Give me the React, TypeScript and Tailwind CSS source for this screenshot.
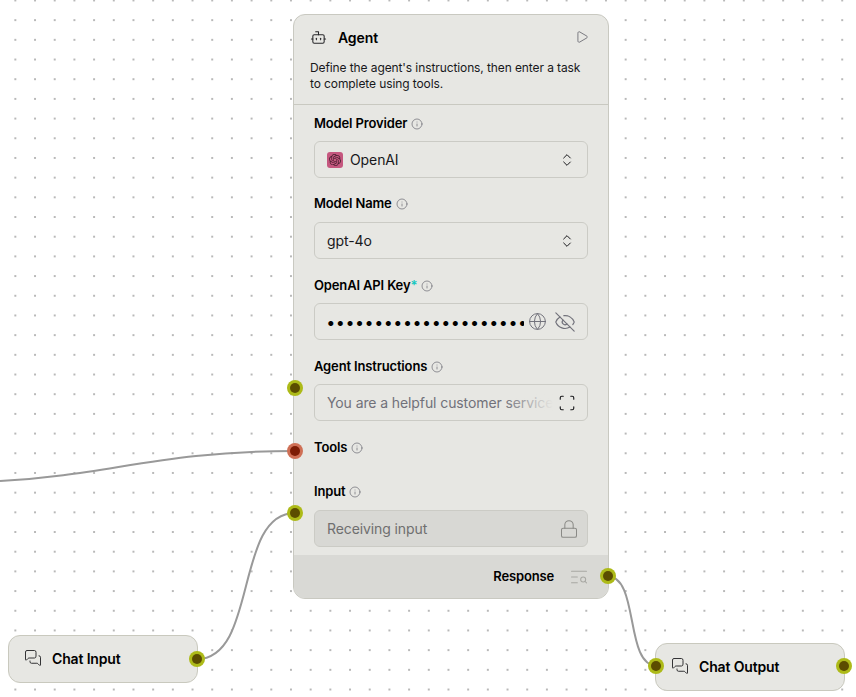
import type { ReactNode } from "react";
import {
  Bot,
  ChevronsUpDown,
  EyeOff,
  Globe,
  Info,
  Lock,
  MessagesSquare,
  Play,
  Scan,
  TextSearch,
} from "lucide-react";
import { SiOpenai } from "react-icons/si";

function Handle({ className, red }: { className: string; red?: boolean }) {
  return (
    <div
      className={`absolute z-10 flex size-4 items-center justify-center rounded-full ${
        red ? "bg-[#cf6f55]" : "bg-[#adba18]"
      } ${className}`}
    >
      <div className={`size-[10px] rounded-full ${red ? "bg-[#7d1c05]" : "bg-[#5b4d00]"}`} />
    </div>
  );
}

function Label({ children }: { children: ReactNode }) {
  return (
    <div className="flex h-5 items-center gap-1 pt-[2px] text-[13px] font-semibold tracking-[-0.15px] text-black">
      <span>{children}</span>
      <Info className="size-3 text-[#71717a]" strokeWidth={1.5} />
    </div>
  );
}

function Field({ children, disabled }: { children: ReactNode; disabled?: boolean }) {
  return (
    <div
      className={`flex h-[37px] items-center rounded-md border border-[#cbcbc5] pl-3 pr-2 text-[14px] tracking-[-0.1px] ${
        disabled ? "bg-[#d8d8d4]" : "bg-[#e7e7e3]"
      }`}
    >
      {children}
    </div>
  );
}

function SmallNode({ title, className }: { title: string; className: string }) {
  return (
    <div
      className={`absolute flex h-[48px] items-center rounded-xl border border-[#c9c9be] bg-[#e7e7e3] pb-[2px] pl-[15px] ${className}`}
    >
      <MessagesSquare className="size-[18px] text-[#27272a]" strokeWidth={1.25} />
      <span className="ml-[10px] text-[14px] font-semibold tracking-[-0.15px] text-black">{title}</span>
    </div>
  );
}

export default function App() {
  return (
    <div className="relative h-[697px] w-[856px] overflow-hidden bg-white font-['Inter',sans-serif] [background-image:radial-gradient(circle,#b8b8b8_0.7px,transparent_1.2px)] [background-position:5.5px_-9.4px] [background-size:19.7px_19.7px]">
      <svg className="absolute inset-0" width="856" height="697" fill="none" stroke="#999999" strokeWidth="2">
        <path d="M0 481 C 110 475 160 451 295 451" />
        <path d="M197 659 C 258 659 234 513 295 513" />
        <path d="M607 576 C 640 576 624 666 657 666" />
      </svg>

      <div className="absolute left-[293px] top-[14px] flex h-[585px] w-[316px] flex-col overflow-hidden rounded-xl border border-[#c9c9c1] bg-[#e7e7e3]">
        <div className="flex h-[45px] shrink-0 items-center justify-between pl-4 pr-[19px]">
          <div className="flex items-center gap-[11px]">
            <Bot className="size-[17px] text-[#27272a]" strokeWidth={1.5} />
            <span className="text-[14px] font-semibold tracking-[-0.1px] text-black">Agent</span>
          </div>
          <Play className="mb-[1px] size-[14px] text-[#52525b]" strokeWidth={1.25} />
        </div>
        <div className="h-[45px] shrink-0 border-b border-[#c9c9c1] px-4 text-[12px] leading-4 tracking-[-0.1px] text-[#18181b]">
          Define the agent's instructions, then enter a task to complete using tools.
        </div>
        <div className="flex flex-1 flex-col px-5 pt-2">
          <Label>Model Provider</Label>
          <div className="mt-2">
            <Field>
              <div className="flex size-4 items-center justify-center rounded-[3px] bg-[#c5577f]">
                <SiOpenai className="size-3 text-[#4a2030]" />
              </div>
              <span className="ml-[7px] flex-1 text-[#18181b]">OpenAI</span>
              <div className="mr-1 flex">
                <ChevronsUpDown className="size-4 text-[#18181b]" strokeWidth={1.5} />
              </div>
            </Field>
          </div>
          <div className="mt-[15px]">
            <Label>Model Name</Label>
          </div>
          <div className="mt-[9px]">
            <Field>
              <span className="flex-1 text-[#18181b]">gpt-4o</span>
              <div className="mr-1 flex">
                <ChevronsUpDown className="size-4 text-[#18181b]" strokeWidth={1.5} />
              </div>
            </Field>
          </div>
          <div className="mt-[16px]">
            <Label>
              OpenAI API Key<span className="text-[#14c8c0]">*</span>
            </Label>
          </div>
          <div className="mt-[8px]">
            <Field>
              <span
                aria-label="API key hidden"
                className="w-[197px] shrink-0 overflow-hidden whitespace-nowrap text-[16px] font-bold tracking-[2px] text-black"
              >
                ••••••••••••••••••••••••••
              </span>
              <Globe className="ml-[4px] size-[19px] shrink-0 text-[#71717a]" strokeWidth={1.25} />
              <EyeOff className="ml-[7px] size-[22px] shrink-0 text-[#71717a]" strokeWidth={1.25} />
            </Field>
          </div>
          <div className="mt-[16px]">
            <Label>Agent Instructions</Label>
          </div>
          <div className="mt-[8px]">
            <Field>
              <span className="relative w-[226px] shrink-0 overflow-hidden whitespace-nowrap text-[#71717a]">
                You are a helpful customer service
                <span className="absolute inset-y-0 right-0 w-[50px] bg-gradient-to-r from-transparent to-[#e7e7e3]" />
              </span>
              <Scan className="ml-[5px] size-[18px] text-[#18181b]" strokeWidth={1.5} />
            </Field>
          </div>
          <div className="mt-[16px]">
            <Label>Tools</Label>
          </div>
          <div className="mt-[24px]">
            <Label>Input</Label>
          </div>
          <div className="mt-[9px]">
            <Field disabled>
              <span className="flex-1 text-[#6f6f6f]">Receiving input</span>
              <Lock className="size-5 text-[#8a8a86]" strokeWidth={1.25} />
            </Field>
          </div>
        </div>
        <div className="flex h-[43px] shrink-0 items-center justify-end bg-[#d9d9d5] pr-[19px]">
          <span className="text-[13px] font-semibold tracking-[-0.15px] text-black">Response</span>
          <TextSearch className="ml-[15px] size-5 text-[#a8a8a3]" strokeWidth={1.25} />
        </div>
      </div>

      <Handle className="left-[286.5px] top-[380px]" />
      <Handle red className="left-[286.5px] top-[443px]" />
      <Handle className="left-[286.5px] top-[505px]" />
      <Handle className="left-[599.5px] top-[568px]" />

      <SmallNode title="Chat Input" className="left-[8px] top-[635px] w-[190px]" />
      <SmallNode title="Chat Output" className="left-[655px] top-[643px] w-[190px]" />
      <Handle className="left-[188.5px] top-[651px]" />
      <Handle className="left-[648px] top-[658px]" />
      <Handle className="left-[835.5px] top-[658px]" />
    </div>
  );
}
